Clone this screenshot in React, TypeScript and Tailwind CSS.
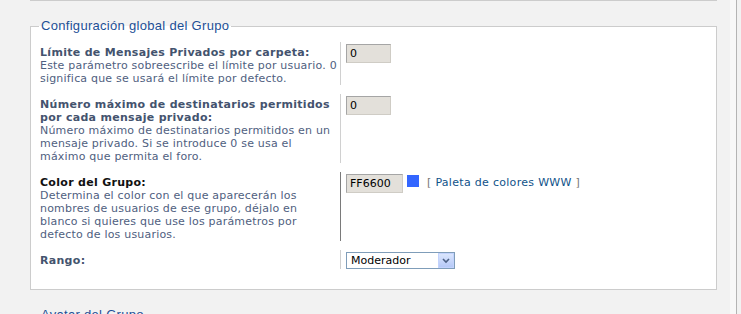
import React from "react";

const body = { fontFamily: '"DejaVu Sans", Verdana, sans-serif' };
const title = { fontFamily: '"Liberation Sans", Arial, sans-serif' };

function Row({
  label,
  desc,
  dark,
  lineDark,
  children,
}: {
  label: string;
  desc?: string;
  dark?: boolean;
  lineDark?: boolean;
  children: React.ReactNode;
}) {
  return (
    <div className="flex">
      <div
        className={`w-[310px] shrink-0 pl-[9px] pr-[3px] pt-[4px] border-r ${
          lineDark ? "border-[#7a7a7a]" : "border-[#d0d0d0]"
        } text-[11px] leading-[13px]`}
      >
        <div className={`font-bold tracking-[0.3px] ${dark ? "text-[#111111]" : "text-[#44536e]"}`}>{label}</div>
        {desc && <div className="tracking-[0.2px] text-[#4f6080]">{desc}</div>}
      </div>
      <div className="pl-[5px] pt-[2px] flex-1">{children}</div>
    </div>
  );
}

function TextInput({ value, w }: { value: string; w: string }) {
  return (
    <div
      className={`${w} h-[19px] bg-[#e3e0da] border border-t-[#a5a5a5] border-l-[#a5a5a5] border-r-[#cfccc5] border-b-[#cfccc5] text-[11px] leading-[17px] pl-[3px] text-black`}
    >
      {value}
    </div>
  );
}

export default function App() {
  return (
    <div className="w-[741px] h-[314px] overflow-hidden bg-[#f2f2f2] flex" style={body}>
      <div className="w-[717px] shrink-0 pl-[30px] flex flex-col">
        <div className="h-[2px] bg-white border-l border-r border-b border-[#cccccc]" />
        <fieldset className="mt-[17px] border border-[#cccccc] bg-white p-0 m-0 pb-[20px]">
          <legend className="ml-[8px] px-[2px] text-[13px] leading-[16px] tracking-[0.3px] text-[#1d4f96]" style={title}>
            Configuración global del Grupo
          </legend>
          <div className="mt-[8px] flex flex-col gap-[9px]">
            <Row
              label="Límite de Mensajes Privados por carpeta:"
              desc="Este parámetro sobreescribe el límite por usuario. 0 significa que se usará el límite por defecto."
            >
              <TextInput value="0" w="w-[45px]" />
            </Row>
            <Row
              label="Número máximo de destinatarios permitidos por cada mensaje privado:"
              desc="Número máximo de destinatarios permitidos en un mensaje privado. Si se introduce 0 se usa el máximo que permita el foro."
            >
              <TextInput value="0" w="w-[45px]" />
            </Row>
            <Row
              label="Color del Grupo:"
              desc="Determina el color con el que aparecerán los nombres de usuarios de ese grupo, déjalo en blanco si quieres que use los parámetros por defecto de los usuarios."
              dark
              lineDark
            >
              <div className="flex items-start">
                <TextInput value="FF6600" w="w-[57px]" />
                <div className="ml-[4px] mt-[1px] w-[12px] h-[12px] bg-[#3366ff]" />
                <div className="ml-[8px] mt-[2px] text-[11px] leading-[13px] tracking-[0.3px] text-[#777777]">
                  [ <span className="text-[#105289]">Paleta de colores WWW</span> ]
                </div>
              </div>
            </Row>
            <Row label="Rango:">
              <div className="w-[109px] h-[17px] border border-[#7f9db9] bg-white flex items-center">
                <span className="flex-1 pl-[4px] text-[11px] leading-[15px] text-black">Moderador</span>
                <div className="w-[16px] h-[15px] bg-gradient-to-b from-[#dbe6fd] to-[#b6c9f7] border border-[#c3d3fd] flex items-center justify-center">
                  <svg width="8" height="6" viewBox="0 0 8 6">
                    <path d="M1 1 L4 4 L7 1" fill="none" stroke="#4d6185" strokeWidth="1.6" />
                  </svg>
                </div>
              </div>
            </Row>
          </div>
        </fieldset>
        <fieldset className="mt-[17px] border border-[#cccccc] bg-white p-0 m-0 h-[60px]">
          <legend className="ml-[8px] px-[2px] text-[13px] leading-[16px] tracking-[0.3px] text-[#1d4f96]" style={title}>
            Avatar del Grupo
          </legend>
        </fieldset>
      </div>
      <div className="w-[13px] shrink-0" />
      <div className="w-[6px] shrink-0 bg-[#f8f8f8]" />
      <div className="w-[1px] shrink-0 bg-[#b4b4b4]" />
      <div className="flex-1 bg-[#f2f2f2]" />
    </div>
  );
}
